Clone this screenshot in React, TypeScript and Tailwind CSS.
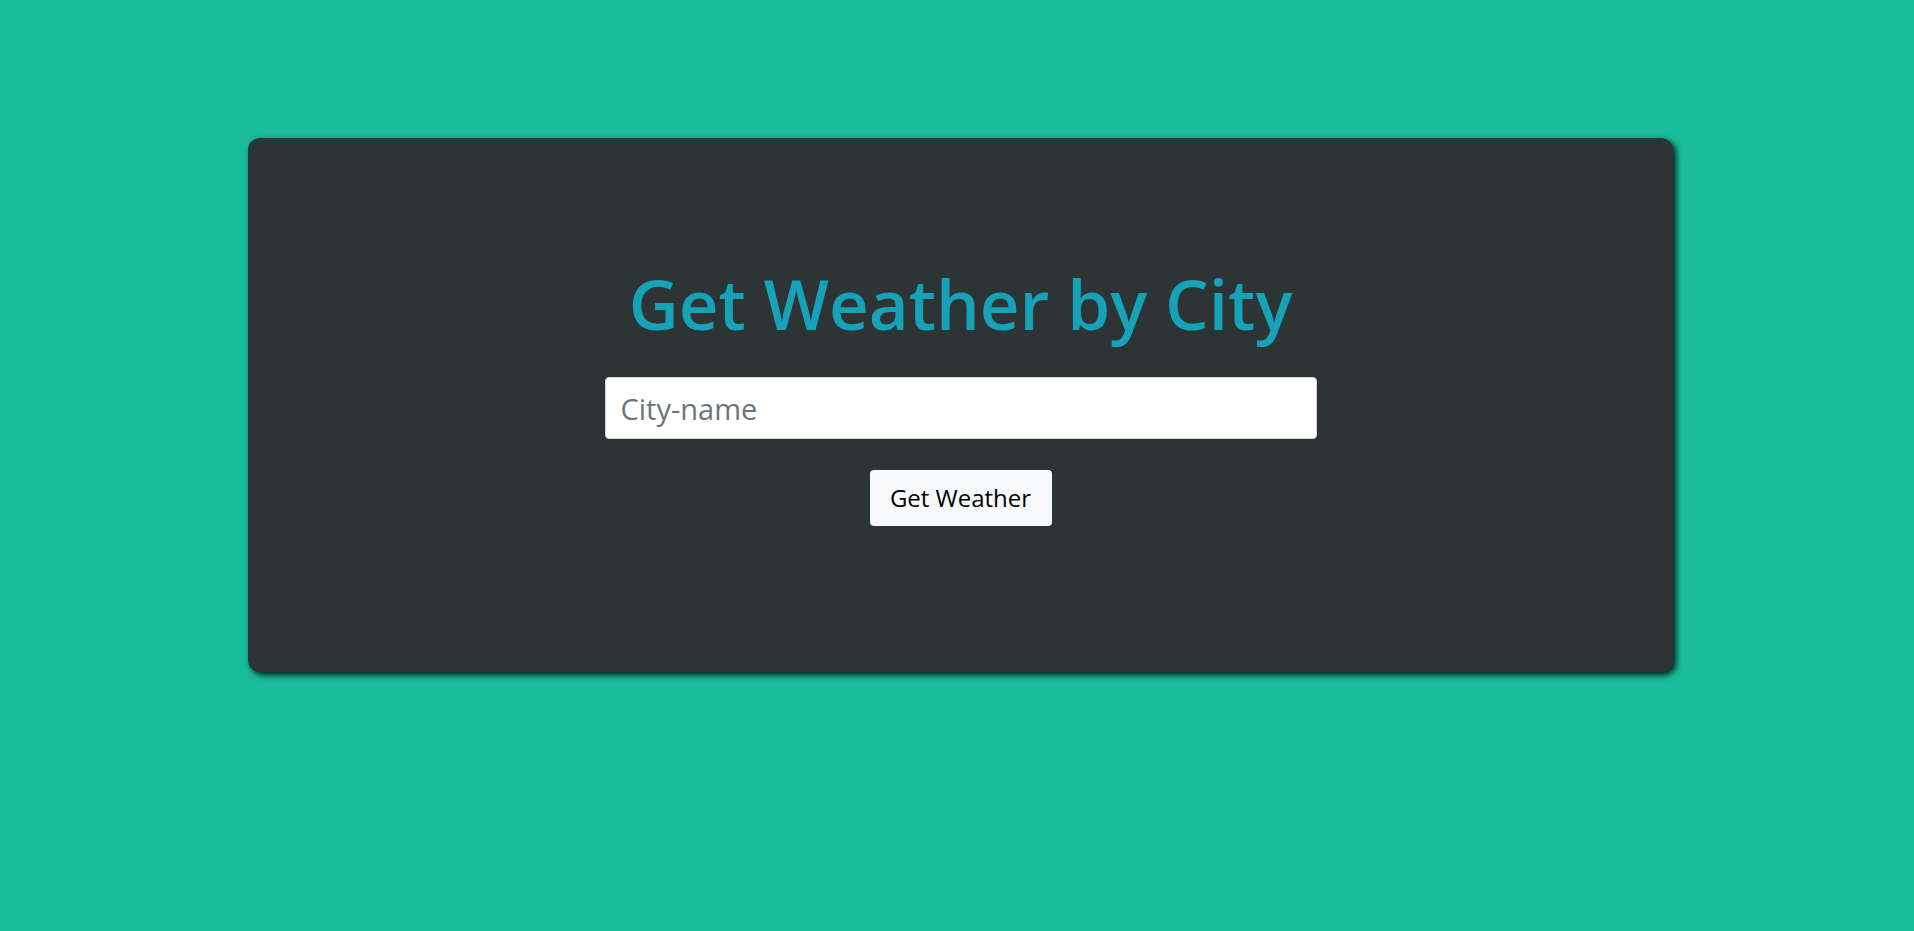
export default function App() {
  return (
    <div className="min-h-[931px] w-full bg-[#1abc9c] pt-[138px]" style={{ fontFamily: '"Open Sans", "Noto Sans", sans-serif' }}>
      <div className="ml-[248px] w-[1425px] h-[534px] rounded-[12px] bg-[#2d3436] shadow-[3px_3px_6px_rgba(0,0,0,0.85)] flex flex-col items-center pt-[122px]">
        <h1 className="text-[69px] leading-[86px] font-semibold text-[#17a2b8] whitespace-nowrap">Get Weather by City</h1>
        <input
          type="text"
          placeholder="City-name"
          className="mt-[31px] w-[712px] h-[62px] rounded-[4px] border border-[#ced4da] bg-white px-[15px] text-[29px] text-[#495057] placeholder:text-[#6c757d] outline-none"
        />
        <button className="mt-[31px] w-[182px] h-[56px] rounded-[4px] bg-[#f8f9fa] text-[24px] text-black">Get Weather</button>
      </div>
    </div>
  );
}
